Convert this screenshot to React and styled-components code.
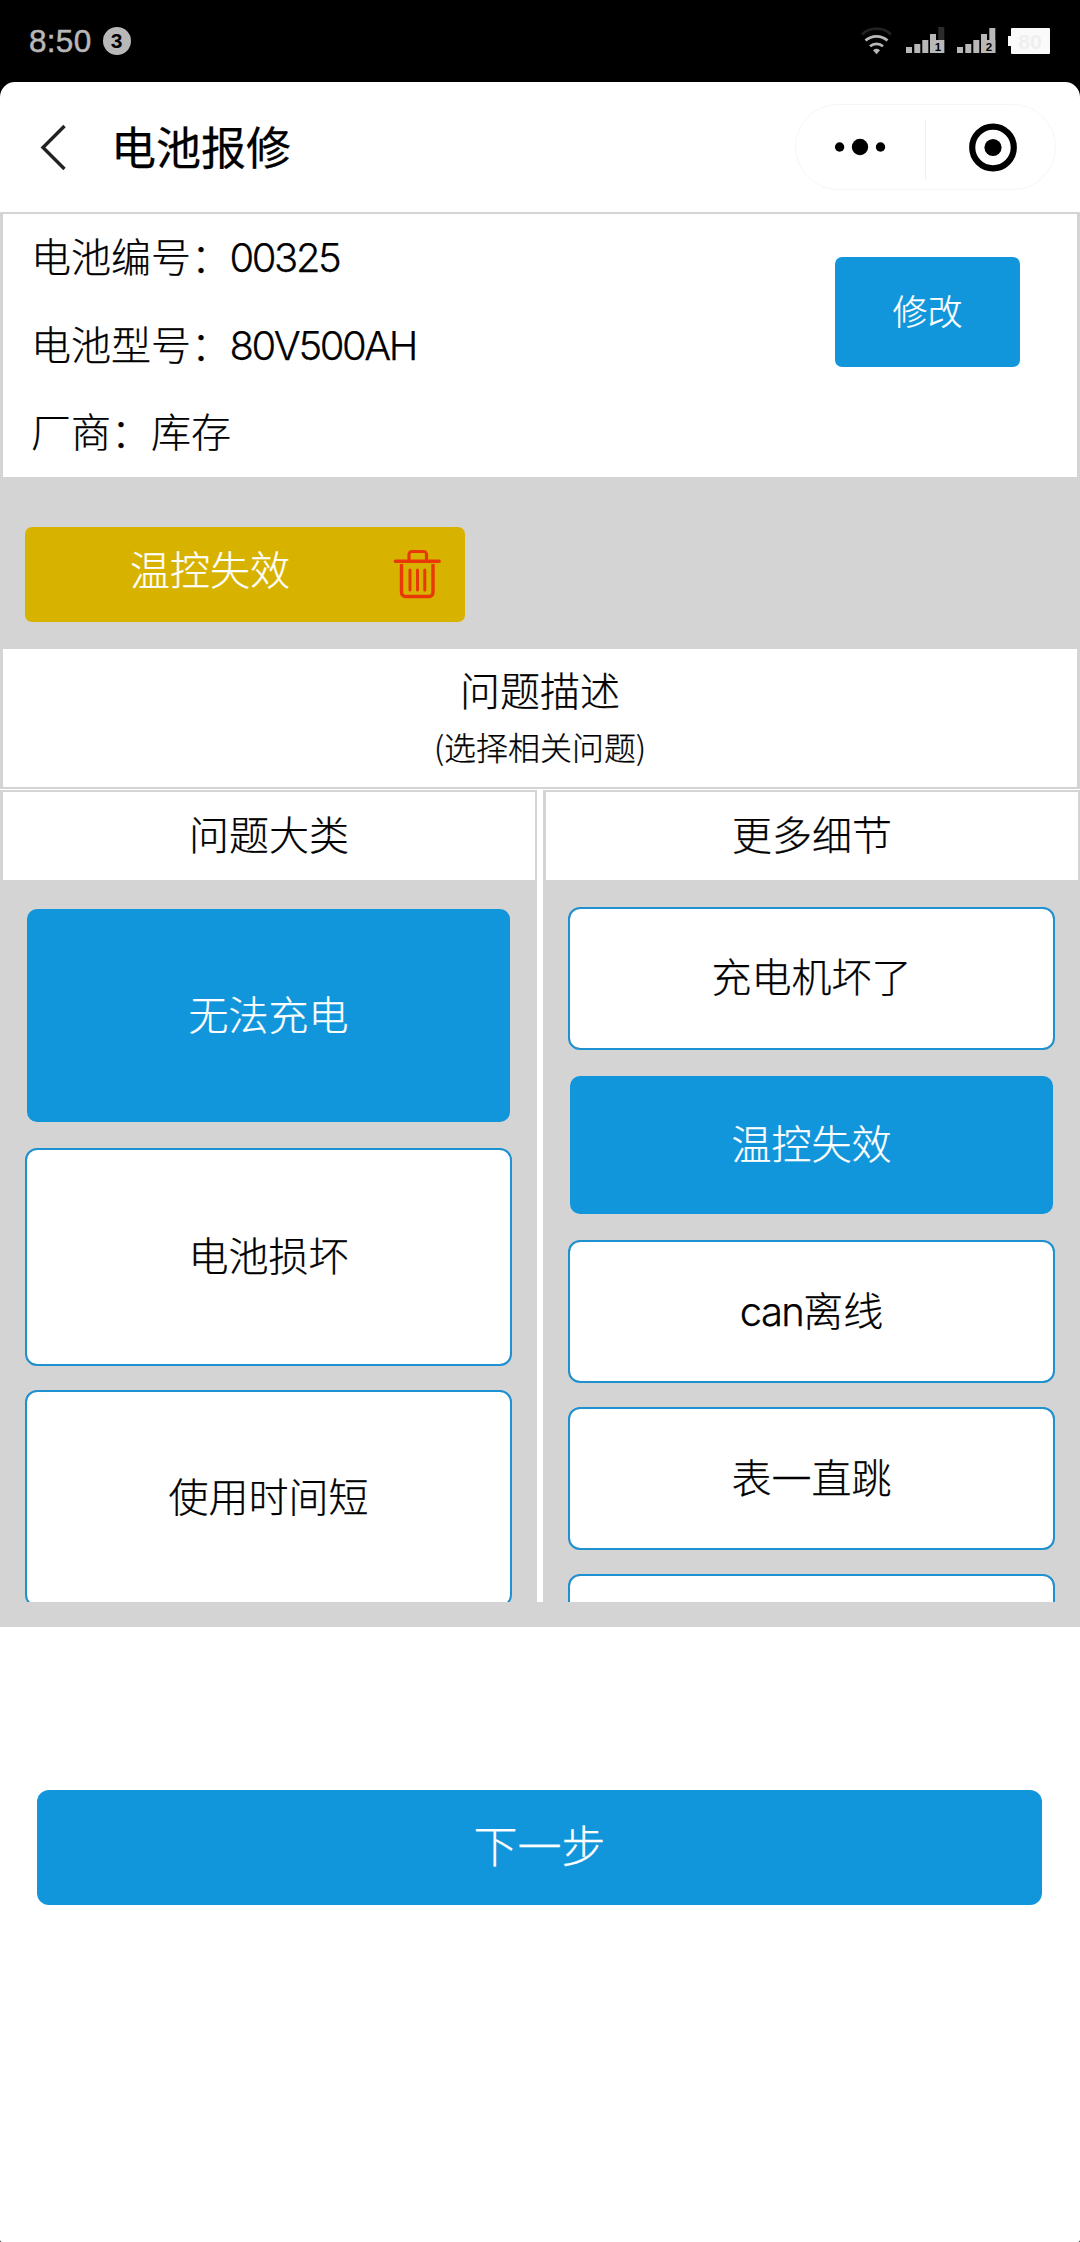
import React, { useState } from "react";
import styled, { createGlobalStyle } from "styled-components";

const BLUE = "#1296db";
const GRAY = "#d4d4d4";

const GlobalStyle = createGlobalStyle`
  * { box-sizing: border-box; }
  html, body { margin: 0; padding: 0; background: #000; }
  button { font: inherit; margin: 0; padding: 0; border: 0; background: none; color: inherit; }
`;

const Screen = styled.div`
  width: 1080px;
  height: 2242px;
  display: flex;
  flex-direction: column;
  overflow: hidden;
  background: #000;
  color: #000;
  font-family: Inter, "Noto Sans CJK SC", sans-serif;
  font-weight: 300;
  font-size: 40px;
  -webkit-text-stroke: 0.25px currentColor;
`;

const StatusBar = styled.div`
  height: 82px;
  flex: none;
  display: flex;
  align-items: center;
  justify-content: space-between;
  padding: 0 30px 0 29px;
  color: #b8b8b8;
  -webkit-text-stroke: 0;
`;

const StatusLeft = styled.div`
  display: flex;
  align-items: center;
  gap: 11px;
`;

const Clock = styled.span`
  font: 400 31.5px/40px "Liberation Sans", sans-serif;
  letter-spacing: 0.3px;
  -webkit-text-stroke: 0.5px #b8b8b8;
`;

const Badge = styled.span`
  width: 28px;
  height: 28px;
  border-radius: 50%;
  background: #b8b8b8;
  color: #000;
  font: 700 21px/28px "Liberation Sans", sans-serif;
  text-align: center;
`;

const Page = styled.div`
  flex: 1;
  display: flex;
  flex-direction: column;
  background: #fff;
  border-radius: 15px 15px 2px 2px;
  min-height: 0;
`;

const NavBar = styled.header`
  height: 130px;
  flex: none;
  display: flex;
  align-items: center;
  padding: 0 24px 0 38px;
`;

const BackButton = styled.button`
  width: 30px;
  height: 48px;
  svg { display: block; }
`;

const Title = styled.h1`
  margin: 0 0 0 43px;
  padding-bottom: 2px;
  flex: 1;
  font: 400 45px/60px "Noto Sans CJK SC", sans-serif;
`;

const Capsule = styled.div`
  width: 261px;
  height: 86px;
  border: 1px solid #f6f6f6;
  border-radius: 43px;
  svg { display: block; }
`;

const InfoPanel = styled.section`
  height: 265px;
  flex: none;
  display: flex;
  justify-content: space-between;
  border: solid ${GRAY};
  border-width: 2px 3px 0;
  padding: 0 57px 0 28px;
`;

const InfoList = styled.div`
  display: flex;
  flex-direction: column;
`;

const InfoRow = styled.div`
  height: 87.5px;
  line-height: 87.5px;
  white-space: pre;
`;

const Latin = styled.span`
  letter-spacing: -2.4px;
  margin-left: -1.5px;
`;

const EditButton = styled.button`
  width: 185px;
  height: 110px;
  margin-top: 43px;
  padding-bottom: 5px;
  border-radius: 7px;
  background: ${BLUE};
  color: #fff;
  font-size: 35px;
`;

const TagArea = styled.section`
  height: 172px;
  flex: none;
  background: ${GRAY};
  padding: 50px 25px 0;
`;

const Tag = styled.div`
  width: 440px;
  height: 95px;
  border-radius: 7px;
  background: #d7b300;
  color: #fff;
  display: flex;
  align-items: center;
  padding: 0 23px 0 0;
  svg { margin-bottom: 2px; }
`;

const TagText = styled.span`
  flex: 1;
  text-align: center;
  line-height: 60px;
  padding: 0 0 8px 3px;
`;

const DescPanel = styled.section`
  height: 140px;
  flex: none;
  display: flex;
  flex-direction: column;
  align-items: center;
  border: solid ${GRAY};
  border-width: 0 3px 2px;
  padding-top: 13px;
`;

const DescTitle = styled.div`
  line-height: 60px;
`;

const DescHint = styled.div`
  font: 300 32px/49px "Noto Sans CJK SC", sans-serif;
`;

const Columns = styled.section`
  height: 838px;
  flex: none;
  display: grid;
  grid-template-columns: 537px 537px;
  justify-content: space-between;
  padding-top: 1px;
  border-bottom: 25px solid ${GRAY};
`;

const Column = styled.div`
  display: flex;
  flex-direction: column;
  overflow: hidden;
  background: ${GRAY};
`;

const ColumnHead = styled.div`
  height: 90px;
  flex: none;
  border: solid ${GRAY};
  border-width: 2px 2px 0 3px;
  background: #fff;
  text-align: center;
  line-height: 88px;
`;

const OptionList = styled.div`
  display: flex;
  flex-direction: column;
  gap: ${(p) => p.$gap}px;
  padding: 27px 25px 0;
`;

const Option = styled.button`
  height: ${(p) => p.$height}px;
  flex: none;
  border: 2px solid ${(p) => (p.$active ? "transparent" : "#1f90d0")};
  border-radius: 12px;
  background: ${(p) => (p.$active ? BLUE : "#fff")};
  background-clip: padding-box;
  color: ${(p) => (p.$active ? "#fff" : "#000")};
  letter-spacing: ${(p) => p.$tracking || 0};
  padding-bottom: 6px;
`;

const NextButton = styled.button`
  flex: none;
  width: 1005px;
  height: 115px;
  margin: 163px auto 0 37px;
  border-radius: 12px;
  background: ${BLUE};
  color: #fff;
  font-size: 44px;
  padding-bottom: 7px;
`;

const DetailLatin = styled.span`
  letter-spacing: -1.6px;
`;

const BARS = [
  [0, 47, 6],
  [8.3, 44, 9],
  [16.3, 40, 13],
  [24, 34, 19],
];

function Signal({ x, label, last, top }) {
  return (
    <g transform={`translate(${x} 0)`} fill="#b8b8b8">
      {BARS.map(([bx, y, h]) => (
        <rect key={bx} x={bx} y={y} width="6" height={h} />
      ))}
      <rect x="32.3" y={top} width="6" height={53 - top} fill={last} />
      <rect x="26" y="40" width="12.3" height="13" />
      <text x="32" y="51.3" textAnchor="middle" fill="#000" fontFamily="Liberation Sans, sans-serif" fontWeight="700" fontSize="11.5">
        {label}
      </text>
    </g>
  );
}

function StatusIcons() {
  return (
    <svg width="190" height="82" viewBox="860 0 190 82">
      <g fill="none" stroke="#b8b8b8" strokeWidth="2.8">
        <path d="M862 34.5a21 21 0 0 1 29 0" stroke="#222" />
        <path d="M865.5 40.5a16.5 16.5 0 0 1 22 0" />
        <path d="M870 46.3a10 10 0 0 1 13 0" />
      </g>
      <path d="M873 50.3a5.5 5.5 0 0 1 7 0l-3.500 3.900z" fill="#b8b8b8" />
      <Signal x={906} label="1" last="#2c2c2c" top={27} />
      <Signal x={957} label="2" last="#b8b8b8" top={28} />
      <path d="M1012 28h37a1 1 0 0 1 1 1v24a1 1 0 0 1-1 1h-37a1 1 0 0 1-1-1v-7h-3V36h3v-7a1 1 0 0 1 1-1z" fill="#fafafa" />
      <text x="1030" y="48.500" textAnchor="middle" fill="#efefef" fontFamily="Liberation Sans, sans-serif" fontWeight="700" fontSize="21">
        80
      </text>
    </svg>
  );
}

function TrashIcon() {
  return (
    <svg width="50" height="52" viewBox="393 548 50 52" fill="none" stroke="#e93808" strokeLinecap="round">
      <path d="M396.500 561.300h43.500" strokeWidth="3.6" />
      <path d="M410 560v-5.500a3 3 0 0 1 3-3h11.500a3 3 0 0 1 3 3v5.500" strokeWidth="3.200" />
      <path d="M402.500 564v28.500a4 4 0 0 0 4 4h23.500a4 4 0 0 0 4-4V564" strokeWidth="3.400" strokeLinecap="butt" />
      <path d="M411 570v20M418.500 570v20M425.800 570v20" strokeWidth="3" />
    </svg>
  );
}

const CATEGORIES = ["无法充电", "电池损坏", "使用时间短"];
const DETAILS = [
  { prefix: "", name: "充电机坏了" },
  { prefix: "", name: "温控失效" },
  { prefix: "can", name: "离线" },
  { prefix: "", name: "表一直跳" },
  { prefix: "", name: "" },
];

export default function App() {
  const [category, setCategory] = useState("无法充电");
  const [detail, setDetail] = useState("温控失效");

  return (
    <>
      <GlobalStyle />
      <Screen>
        <StatusBar>
          <StatusLeft>
            <Clock>8:50</Clock>
            <Badge>3</Badge>
          </StatusLeft>
          <StatusIcons />
        </StatusBar>
        <Page>
          <NavBar>
            <BackButton aria-label="返回">
              <svg width="30" height="48" viewBox="38 123 30 48" fill="none" stroke="#222" strokeWidth="3.400">
                <path d="M64.500 126L43 147.500L64.500 169" />
              </svg>
            </BackButton>
            <Title>电池报修</Title>
            <Capsule>
              <svg width="259" height="84" viewBox="796 105 259 84">
                <circle cx="839.600" cy="147" r="4.700" />
                <circle cx="860" cy="147" r="8.200" />
                <circle cx="880.500" cy="147" r="4.700" />
                <path d="M925.500 120v60" stroke="#f0f0f0" />
                <circle cx="993" cy="147.500" r="20.800" fill="none" stroke="#000" strokeWidth="6.200" />
                <circle cx="993" cy="147.500" r="8.600" />
              </svg>
            </Capsule>
          </NavBar>
          <InfoPanel>
            <InfoList>
              <InfoRow>电池编号：<Latin>00325</Latin></InfoRow>
              <InfoRow>电池型号：<Latin>80V500AH</Latin></InfoRow>
              <InfoRow>厂商：库存</InfoRow>
            </InfoList>
            <EditButton>修改</EditButton>
          </InfoPanel>
          <TagArea>
            <Tag>
              <TagText>{detail}</TagText>
              <TrashIcon />
            </Tag>
          </TagArea>
          <DescPanel>
            <DescTitle>问题描述</DescTitle>
            <DescHint>(选择相关问题)</DescHint>
          </DescPanel>
          <Columns>
            <Column>
              <ColumnHead>问题大类</ColumnHead>
              <OptionList $gap={24}>
                {CATEGORIES.map((name) => (
                  <Option key={name} $height={217.4} $active={name === category} onClick={() => setCategory(name)}>
                    {name}
                  </Option>
                ))}
              </OptionList>
            </Column>
            <Column>
              <ColumnHead>更多细节</ColumnHead>
              <OptionList $gap={24.15}>
                {DETAILS.map(({ prefix, name }) => (
                  <Option key={name} $height={142.6} $active={name === detail} onClick={() => setDetail(name)}>
                    {prefix && <DetailLatin>{prefix}</DetailLatin>}
                    {name}
                  </Option>
                ))}
              </OptionList>
            </Column>
          </Columns>
          <NextButton>下一步</NextButton>
        </Page>
      </Screen>
    </>
  );
}
